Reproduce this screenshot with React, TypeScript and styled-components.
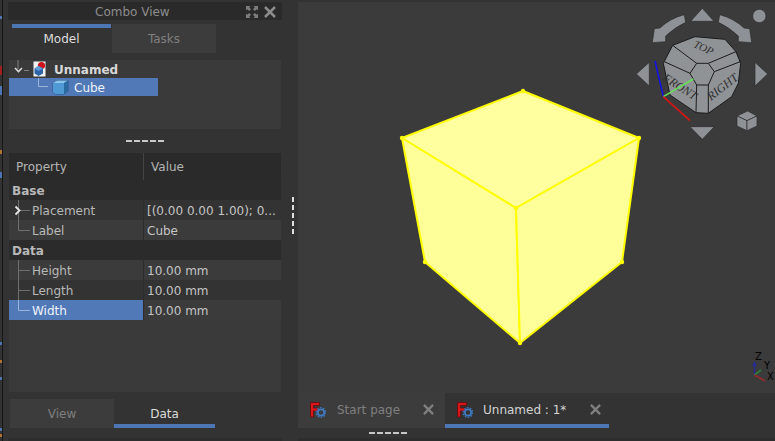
import React from "react";
import styled, { createGlobalStyle } from "styled-components";

const GlobalStyle = createGlobalStyle`
  html, body {
    margin: 0;
    padding: 0;
    background: #333333;
    overflow: hidden;
  }
  * {
    box-sizing: border-box;
  }
`;

const Window = styled.div`
  display: flex;
  width: 775px;
  height: 441px;
  background: #333333;
  color: #c8c8c8;
  font-family: "DejaVu Sans", sans-serif;
  font-size: 12px;
`;

// bit of the window behind, peeking through on the left
const BehindEdge = styled.div`
  width: 3px;
  flex: none;
  border-right: 1px solid #161616;
  background: linear-gradient(
    to bottom,
    #333 0 16px, #4f76b4 16px 19px, #333 19px 66px,
    #a02020 66px 75px, #333 75px 86px, #4f76b4 86px 95px,
    #333 95px 150px, #b07030 150px 154px, #333 154px 172px,
    #4f76b4 172px 178px, #333 178px 342px, #4f76b4 342px 345px,
    #333 345px 360px, #b07030 360px 363px, #333 363px 377px,
    #4f76b4 377px 380px, #333 380px 428px, #4f76b4 428px 431px,
    #333 431px 434px, #b07030 434px 437px, #333 437px
  );
`;

const Dock = styled.div`
  display: flex;
  flex-direction: column;
  width: 279px;
  flex: none;
  padding: 2px 0 0 5px;
`;

const DockTitle = styled.div`
  display: flex;
  align-items: center;
  height: 18px;
  padding: 1px 6px 0 87px;
  background: #2a2a2a;
  color: #8c8c8c;
`;

const TitleText = styled.span`
  flex: 1;
`;

const TitleIcons = styled.div`
  display: flex;
  align-items: center;
  gap: 6px;
`;

const TabRow = styled.div<{ $indent: number; $top: number }>`
  display: flex;
  margin-top: ${(p) => p.$top}px;
  padding-left: ${(p) => p.$indent}px;
`;

const TopTab = styled.div<{ $active?: boolean; $width: number }>`
  display: flex;
  align-items: center;
  justify-content: center;
  width: ${(p) => p.$width}px;
  height: 29px;
  background: ${(p) => (p.$active ? "#333333" : "#3c3c3c")};
  color: ${(p) => (p.$active ? "#dcdcdc" : "#7f7f7f")};
  margin-right: 1px;
  position: relative;

  &::before {
    content: "";
    position: absolute;
    top: 0;
    left: 0;
    right: 0;
    height: 4px;
    background: ${(p) => (p.$active ? "#4f76b4" : "transparent")};
  }
`;

const BottomTab = styled(TopTab)`
  margin-right: 0;

  &::before {
    top: auto;
    bottom: 0;
  }
`;

const TreePanel = styled.div`
  height: 69px;
  margin: 7px 1px 0 1px;
  background: #3a3a3a;
`;

const TreeRow = styled.div<{ $selected?: boolean }>`
  display: flex;
  align-items: center;
  width: 149px;
  height: 18px;
  background: ${(p) => (p.$selected ? "#5179b8" : "transparent")};
  color: ${(p) => (p.$selected ? "#eef2f8" : "#d8d8d8")};
`;

const RootName = styled.span`
  font-weight: bold;
  margin: 1px 0 0 7px;
`;

const ChildName = styled.span`
  margin: 1px 0 0 5px;
`;

const Splitter = styled.div`
  display: flex;
  align-items: center;
  justify-content: center;
  height: 24px;
`;

const HDashes = styled.div`
  width: 38px;
  height: 2px;
  background: repeating-linear-gradient(to right, #c8c8c8 0 6px, transparent 6px 8px);
`;

const PropertyPanel = styled.div`
  display: flex;
  flex-direction: column;
  height: 239px;
  margin: 0 1px;
  background: #3a3a3a;
`;

const HeaderRow = styled.div`
  display: grid;
  grid-template-columns: 134px 1fr;
  height: 27px;
  background: #2a2a2a;
  color: #b4b4b4;
`;

const HeaderCell = styled.div<{ $divider?: boolean }>`
  display: flex;
  align-items: center;
  padding-left: 7px;
  border-left: ${(p) => (p.$divider ? "1px solid #444444" : "none")};
`;

const GroupRow = styled.div`
  display: flex;
  align-items: center;
  height: 20px;
  padding: 1px 0 0 3px;
  background: #2b2b2b;
  color: #b8b8b8;
  font-weight: bold;
`;

const PropRow = styled.div<{ $alt?: boolean }>`
  display: grid;
  grid-template-columns: 134px 1fr;
  height: 20px;
  background: ${(p) => (p.$alt ? "#3b3b3b" : "#333333")};
`;

const NameCell = styled.div<{ $selected?: boolean }>`
  display: flex;
  align-items: center;
  background: ${(p) => (p.$selected ? "#5179b8" : "transparent")};
  color: ${(p) => (p.$selected ? "#f0f3f8" : "#b8b8b8")};
`;

const NameText = styled.span`
  margin-top: 1px;
`;

const ValueCell = styled.div`
  display: flex;
  align-items: center;
  padding: 1px 0 0 3px;
  border-left: 1px solid #2c2c2c;
  color: #c4c4c4;
  white-space: nowrap;
`;

const BottomEdge = styled.div`
  height: 3px;
  margin-top: auto;
  background: #2d2d2d;
`;

const Gutter = styled.div`
  display: flex;
  align-items: center;
  justify-content: flex-end;
  width: 16px;
  flex: none;
  padding: 0 4px 11px 0;
`;

const VDashes = styled.div`
  width: 2px;
  height: 37px;
  background: repeating-linear-gradient(to bottom, #e0e0e0 0 5px, transparent 5px 8px);
`;

const MainArea = styled.div`
  display: flex;
  flex-direction: column;
  flex: 1;
  padding-top: 2px;
`;

const Viewport = styled.div`
  height: 391px;
  background: #3b3b3b;
`;

const SceneSvg = styled.svg`
  display: block;
  width: 100%;
  height: 100%;
`;

const DocTabs = styled.div`
  display: flex;
  height: 35px;
  background: #333333;
`;

const DocTab = styled.div<{ $active?: boolean; $width: number }>`
  display: flex;
  align-items: center;
  width: ${(p) => p.$width}px;
  padding: 2px ${(p) => (p.$active ? 8 : 11)}px 0 12px;
  background: ${(p) => (p.$active ? "#333333" : "#3c3c3c")};
  color: ${(p) => (p.$active ? "#d4d4d4" : "#7f7f7f")};
  border-bottom: 4px solid ${(p) => (p.$active ? "#4f76b4" : "#3c3c3c")};
`;

const DocTabLabel = styled.span<{ $gap: number }>`
  flex: 1;
  margin-left: ${(p) => p.$gap}px;
  line-height: 14px;
`;

const LowerSplitter = styled.div`
  display: flex;
  padding: 4px 0 0 71px;
  height: 10px;
`;

const MainBottomEdge = styled(BottomEdge)`
  margin-top: 0;
`;

const IconSvg = styled.svg`
  display: block;
  flex: none;
`;

const CloseIcon: React.FC<{ size: number; color: string }> = ({ size, color }) => (
  <IconSvg width={size} height={size} viewBox="0 0 12 12">
    <path d="M1 1 L11 11 M11 1 L1 11" stroke={color} strokeWidth="2.5" fill="none" />
  </IconSvg>
);

const FloatIcon = () => (
  <IconSvg width="12" height="12" viewBox="0 0 12 12">
    <g fill="#7d7d7d">
      <path d="M0 0 H4.5 L3.2 1.3 L5 3.2 L3.2 5 L1.3 3.2 L0 4.5 Z" />
      <path d="M12 0 H7.5 L8.8 1.3 L7 3.2 L8.8 5 L10.7 3.2 L12 4.5 Z" />
      <path d="M0 12 H4.5 L3.2 10.7 L5 8.8 L3.2 7 L1.3 8.8 L0 7.5 Z" />
      <path d="M12 12 H7.5 L8.8 10.7 L7 8.8 L8.8 7 L10.7 8.8 L12 7.5 Z" />
    </g>
  </IconSvg>
);

const DocIcon = () => (
  <IconSvg width="14" height="16" viewBox="0 0 14 16">
    <rect x="0.5" y="0.5" width="12" height="15" fill="#f2f2f2" />
    <circle cx="8.5" cy="4.5" r="3.6" fill="#d0121b" />
    <path d="M5.5 5 L10 7.5 V12.5 L5.5 15 L1.5 12.5 V7.5 Z" fill="#2c64a8" />
    <path d="M5.5 10 L10 7.5 L5.5 5 L1.5 7.5 Z" fill="#5c9ad8" />
  </IconSvg>
);

const CubeIcon = () => (
  <IconSvg width="17" height="16" viewBox="0 0 17 16">
    <path d="M1 4 L5 1.5 H16 V12 L12 15 H3 L1 13 Z" fill="#3f86c2" stroke="#1f4f7c" strokeWidth="0.8" />
    <path d="M1 4 L5 1.5 H16 L12 4 Z" fill="#8cc4ea" />
    <path d="M12 4 L16 1.5 V12 L12 15 Z" fill="#2a6aa2" />
    <path d="M1 4 H12 V15 H3 L1 13 Z" fill="#4f9ad4" />
  </IconSvg>
);

const FreeCadIcon = () => (
  <IconSvg width="16" height="16" viewBox="0 0 16 16">
    <path d="M0.5 0.5 H9.5 V3.5 H3.5 V6 H8 V9 H3.5 V15 H0.5 Z" fill="#d8161c" stroke="#5a0a0c" strokeWidth="0.7" />
    <circle cx="11" cy="10.5" r="3.2" fill="none" stroke="#3f79c0" strokeWidth="1.8" />
    <circle cx="11" cy="10.5" r="4.8" fill="none" stroke="#3f79c0" strokeWidth="1.3" strokeDasharray="1.6 1.4" />
  </IconSvg>
);

// tree connector for the root and its child, 1px grey lines
const RootBranch = () => (
  <IconSvg width="24" height="18" viewBox="0 0 24 18">
    <path d="M9 0 V9 M15 10.5 H20" stroke="#7e7e7e" fill="none" />
    <path d="M6 8 L9.5 11.5 L13 8" stroke="#d8d8d8" strokeWidth="1.6" fill="none" />
  </IconSvg>
);

const ChildBranch = () => (
  <IconSvg width="43" height="18" viewBox="0 0 43 18">
    <path d="M29.5 0 V8.5 H39" stroke="#9cb4d8" fill="none" />
  </IconSvg>
);

type BranchKind = "expand" | "tee" | "end" | "endSelected";

const PropBranch: React.FC<{ kind: BranchKind }> = ({ kind }) => {
  const stroke = kind === "endSelected" ? "#9cb4d8" : "#6f6f6f";
  const vertical = kind === "end" || kind === "endSelected" ? "M9.5 0 V10.5 H21" : "M9.5 0 V20 M9.5 10.5 H21";
  return (
    <IconSvg width="23" height="20" viewBox="0 0 23 20">
      <path d={vertical} stroke={stroke} fill="none" />
      {kind === "expand" && (
        <path d="M6.5 6.5 L10.5 10.5 L6.5 14.5" stroke="#e6e6e6" strokeWidth="1.8" fill="none" />
      )}
    </IconSvg>
  );
};

const NavLabel: React.FC<{ x: number; y: number; rotate: number; size: number; children: React.ReactNode }> = ({
  x,
  y,
  rotate,
  size,
  children,
}) => (
  <text x={x} y={y} fontSize={size} textAnchor="middle" transform={`rotate(${rotate} ${x} ${y})`}>
    {children}
  </text>
);

const NavCube = () => (
  <g>
    <g transform="translate(625 0) scale(0.3333)" fill="#8e9195" stroke="#2a2a2a" strokeWidth="2">
      <path d="M232 25 L197 64 H267 Z" />
      <path d="M232 418 L195 380 H268 Z" />
      <path d="M34 222 L73 187 V258 Z" />
      <path d="M428 222 L390 187 V258 Z" />
      <circle cx="403" cy="48" r="20" />
      <path d="M178 44 Q135 55 105 84 L88 86 L82 128 L122 125 L122 108 Q150 82 182 67 Z" />
      <path d="M284 44 Q327 55 357 84 L374 86 L380 128 L340 125 L340 108 Q312 82 280 67 Z" />
      <path d="M368 333 L396 348 L366 362 L336 348 Z" />
      <path d="M336 348 L366 362 V392 L336 378 Z" />
      <path d="M396 348 L366 362 V392 L396 378 Z" />
    </g>
    <g transform="translate(625 0) scale(0.3333)" stroke="#1a1a1a" strokeWidth="3" fill="#909396">
      <path d="M115 190 L143 136 L210 110 L300 118 L333 155 L347 190 L340 250 L320 290 L250 340 L213 338 L135 285 Z" />
      <path d="M143 136 L215 190 H250 L333 155 M118 185 L195 220 L215 190 M195 220 L215 255 H250 L268 215 L250 190 M268 215 L346 185 M215 255 L213 338 M250 255 V340" fill="none" />
    </g>
    <g fontFamily="'Liberation Serif', serif" fontStyle="italic" fill="#303030">
      <NavLabel x={702} y={51} rotate={25} size={11}>TOP</NavLabel>
      <NavLabel x={678} y={90} rotate={33} size={12}>FRONT</NavLabel>
      <NavLabel x={725} y={90} rotate={-38} size={12}>RIGHT</NavLabel>
    </g>
    <g transform="translate(625 0) scale(0.3333)" fill="none" strokeWidth="5">
      <path d="M115 290 L90 183" stroke="#1414e0" />
      <path d="M115 290 L205 237" stroke="#66e05a" />
      <path d="M115 290 L195 362" stroke="#d81414" />
    </g>
  </g>
);

const Cube = () => (
  <g stroke="#ffff00" strokeWidth="2" strokeLinejoin="round">
    <path d="M523 91 L639 138 L516 208 L402 138 Z" fill="#ffffa0" />
    <path d="M402 138 L516 208 L520 343 L425 262 Z" fill="#ffff99" />
    <path d="M639 138 L516 208 L520 343 L622 262 Z" fill="#ffff99" />
    <g fill="#ffff00" stroke="none">
      {[
        [523, 91],
        [639, 138],
        [402, 138],
        [516, 208],
        [425, 262],
        [622, 262],
        [520, 343],
      ].map(([cx, cy]) => (
        <circle key={`${cx}-${cy}`} cx={cx} cy={cy} r="2.2" />
      ))}
    </g>
  </g>
);

const Triad = () => (
  <g>
    <path d="M754.5 375 V364" stroke="#2a2a90" strokeWidth="1.5" />
    <path d="M752 366 L754.5 361 L757 366 Z" fill="#2a2a90" />
    <path d="M754.5 375 L761 370" stroke="#2f7a3a" strokeWidth="2" />
    <path d="M754.5 375 L765 381" stroke="#8c2c2c" strokeWidth="2" />
    <g fontFamily="'DejaVu Sans', sans-serif" fontSize="10" fill="#000000">
      <text x="755" y="360">Z</text>
      <text x="764" y="369">Y</text>
      <text x="767" y="380">X</text>
    </g>
  </g>
);

type Prop = { name: string; value: string; branch: BranchKind; alt?: boolean; selected?: boolean };

const baseProps: Prop[] = [
  { name: "Placement", value: "[(0.00 0.00 1.00); 0...", branch: "expand" },
  { name: "Label", value: "Cube", branch: "end", alt: true },
];

const dataProps: Prop[] = [
  { name: "Height", value: "10.00 mm", branch: "tee", alt: true },
  { name: "Length", value: "10.00 mm", branch: "tee" },
  { name: "Width", value: "10.00 mm", branch: "endSelected", alt: true, selected: true },
];

const renderProp = (prop: Prop) => (
  <PropRow key={prop.name} $alt={prop.alt}>
    <NameCell $selected={prop.selected}>
      <PropBranch kind={prop.branch} />
      <NameText>{prop.name}</NameText>
    </NameCell>
    <ValueCell>{prop.value}</ValueCell>
  </PropRow>
);

const App: React.FC = () => {
  return (
    <Window>
      <GlobalStyle />
      <BehindEdge />
      <Dock>
        <DockTitle>
          <TitleText>Combo View</TitleText>
          <TitleIcons>
            <FloatIcon />
            <CloseIcon size={12} color="#8c8c8c" />
          </TitleIcons>
        </DockTitle>
        <TabRow $indent={4} $top={4}>
          <TopTab $active $width={99}>Model</TopTab>
          <TopTab $width={104}>Tasks</TopTab>
        </TabRow>
        <TreePanel>
          <TreeRow>
            <RootBranch />
            <DocIcon />
            <RootName>Unnamed</RootName>
          </TreeRow>
          <TreeRow $selected>
            <ChildBranch />
            <CubeIcon />
            <ChildName>Cube</ChildName>
          </TreeRow>
        </TreePanel>
        <Splitter>
          <HDashes />
        </Splitter>
        <PropertyPanel>
          <HeaderRow>
            <HeaderCell>Property</HeaderCell>
            <HeaderCell $divider>Value</HeaderCell>
          </HeaderRow>
          <GroupRow>Base</GroupRow>
          {baseProps.map(renderProp)}
          <GroupRow>Data</GroupRow>
          {dataProps.map(renderProp)}
        </PropertyPanel>
        <TabRow $indent={2} $top={7}>
          <BottomTab $width={104}>View</BottomTab>
          <BottomTab $active $width={101}>Data</BottomTab>
        </TabRow>
        <BottomEdge />
      </Dock>
      <Gutter>
        <VDashes />
      </Gutter>
      <MainArea>
        <Viewport>
          <SceneSvg viewBox="298 2 477 391">
            <Cube />
            <NavCube />
            <Triad />
          </SceneSvg>
        </Viewport>
        <DocTabs>
          <DocTab $width={147}>
            <FreeCadIcon />
            <DocTabLabel $gap={11}>Start page</DocTabLabel>
            <CloseIcon size={11} color="#7f7f7f" />
          </DocTab>
          <DocTab $active $width={164}>
            <FreeCadIcon />
            <DocTabLabel $gap={10}>Unnamed : 1*</DocTabLabel>
            <CloseIcon size={11} color="#7f7f7f" />
          </DocTab>
        </DocTabs>
        <LowerSplitter>
          <HDashes />
        </LowerSplitter>
        <MainBottomEdge />
      </MainArea>
    </Window>
  );
};

export default App;
